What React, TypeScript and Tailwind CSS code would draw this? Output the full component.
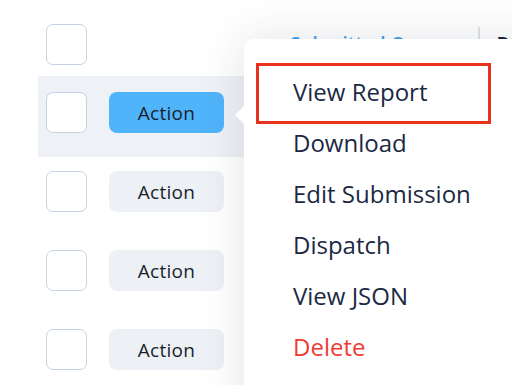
import { ReactNode } from 'react';

const menuItems = ['View Report', 'Download', 'Edit Submission', 'Dispatch', 'View JSON', 'Delete'];

function Checkbox() {
  return <div className="w-[41px] h-[41px] shrink-0 rounded-[7px] border-[1.5px] border-[#c6d1e1] bg-white" />;
}

function ActionButton({ active }: { active?: boolean }) {
  return (
    <button
      className={`ml-[22px] w-[115px] h-[41px] pt-[2px] rounded-[8px] text-[19px] tracking-[0.3px] text-[#1a1f2c] ${
        active ? 'bg-[#50b4fa]' : 'bg-[#edf0f5]'
      }`}
    >
      Action
    </button>
  );
}

function Row({ active, children }: { active?: boolean; children?: ReactNode }) {
  return (
    <div
      className={`flex items-start pl-[8px] ${
        active ? 'h-[81px] pt-[16px] bg-[#eef1f6]' : 'h-[79px] pt-[14px]'
      }`}
    >
      {children}
    </div>
  );
}

export default function App() {
  return (
    <div
      className="relative w-[512px] h-[385px] overflow-hidden bg-white"
      style={{ fontFamily: '"Open Sans", "Liberation Sans", sans-serif' }}
    >
      {/* table */}
      <div className="flex flex-col">
        <div className="flex items-start h-[76px] pl-[46px]">
          <div className="mt-[24px]">
            <Checkbox />
          </div>
          <span className="ml-[203px] mt-[30px] text-[19px] font-semibold text-[#3ea2f2] whitespace-nowrap">
            Submitted On
          </span>
          <div className="ml-[60px] mt-[27px] w-[2px] h-[26px] bg-[#dfe3ea]" />
          <span className="ml-[17px] mt-[30px] text-[19px] font-semibold text-[#1b2437]">D</span>
        </div>
        <div className="ml-[38px] flex flex-col">
          <Row active>
            <Checkbox />
            <ActionButton active />
          </Row>
          <Row>
            <Checkbox />
            <ActionButton />
          </Row>
          <Row>
            <Checkbox />
            <ActionButton />
          </Row>
          <Row>
            <Checkbox />
            <ActionButton />
          </Row>
        </div>
      </div>

      {/* dropdown menu */}
      <div className="absolute left-[244px] top-[39px] w-[320px] h-[400px] bg-white rounded-tl-[10px] shadow-[0_0_45px_rgba(30,40,60,0.13)]">
        <div className="absolute left-[-9px] top-[67px] w-0 h-0 border-y-[9px] border-y-transparent border-r-[9px] border-r-white" />
        <ul className="pt-[29px] flex flex-col">
          {menuItems.map((item, i) => (
            <li
              key={item}
              className={`ml-[17px] w-[225px] h-[51px] flex items-center pl-[32px] pb-[3px] text-[24px] whitespace-nowrap ${
                i === menuItems.length - 1 ? 'text-[#ee3b34]' : 'text-[#1c2944]'
              } ${i === 0 ? 'outline-solid outline-[3px] outline-[#e8321d] outline-offset-[2px]' : ''}`}
            >
              {item}
            </li>
          ))}
        </ul>
      </div>
    </div>
  );
}
